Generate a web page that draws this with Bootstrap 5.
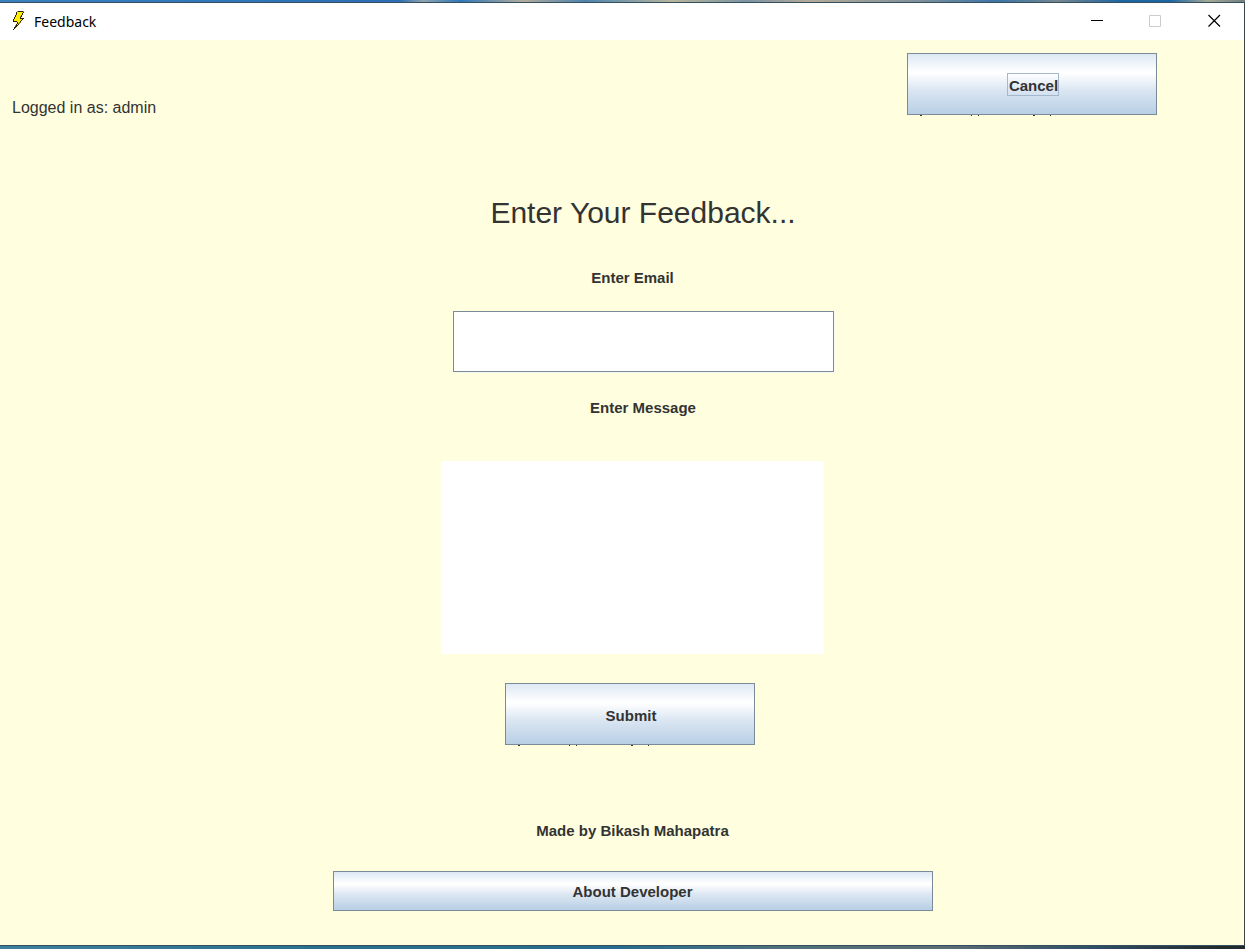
<!DOCTYPE html>
<html lang="en">
<head>
<meta charset="utf-8">
<meta name="viewport" content="width=device-width, initial-scale=1">
<title>Feedback</title>
<link href="https://cdn.jsdelivr.net/npm/bootstrap@5.3.0/dist/css/bootstrap.min.css" rel="stylesheet">
<style>
  body {
    font-family: "Liberation Sans", Arial, sans-serif;
    font-size: 15px;
    line-height: 20px;
    color: #333;
    background: #2f7191;
  }
  .desk-top {
    height: 2px;
    background: linear-gradient(90deg, #3a80c0 0, #2a6db5 32%, #8fa3ad 34%, #2f78b8 37%, #b3ab9c 42%, #4d84ad 47%, #b8b59c 54%, #7b93a3 60%, #b5aa98 65%, #7d8f9b 74%, #3d74a8 80%, #75868f 85%, #1c66a3 90%, #1c66a3 94%, #a5a894 97%, #6e8080 100%);
  }
  .desk-bottom {
    height: 3px;
    background: linear-gradient(90deg, #3f7f9e 0, #2a7190 25%, #286d8f 50%, #51717a 63%, #5b6d73 76%, #2f4e66 88%, #222a2c 98%);
  }
  .app-window { border: solid #34505f; border-width: 1px 0; border-right: 1px solid #3c474c; background: #ffffdf; }
  .title-strip { height: 37px; font-family: "Noto Sans", "Open Sans", sans-serif; font-size: 14px; color: #000; }
  .caption-btn { width: 59px; height: 37px; padding: 0 0 2px; border: 0; background: none; }
  .caption-btn svg, .title-strip svg { display: block; }
  .caption-btn svg { margin: auto; }
  .top-zone { padding: 13px 87px 0 12px; }
  .user-line { font-size: 16px; padding-top: 45px; }
  .metal-btn {
    height: 62px;
    width: 250px;
    padding: 4px 0 0 2px;
    border: 1px solid #7a8a99;
    border-radius: 0;
    color: #333;
    font-weight: 700;
    font-size: 15px;
    line-height: 20px;
    background: linear-gradient(#dde8f3 0, #fff 30%, #fff 32%, #dbe6f2 60%, #b8cfe5 100%);
  }
  .metal-btn.slim { height: 40px; width: 100%; max-width: 600px; padding: 2px 0 0; }
  .metal-btn.framed { padding-top: 0; }
  .focus-frame { display: inline-block; vertical-align: top; border: 1px solid #a3b8cc; height: 23px; line-height: 24px; padding-left: 1px; }
  .clipped-tails { position: absolute; left: 0; top: 100%; }
  .line-a { padding-left: 21px; }
  .line-b { padding-left: 42px; }
  .line-c { padding-left: 16px; }
  .heading-text { font-size: 30px; line-height: 36px; font-weight: 400; }
  .email-box {
    width: 381px; height: 61px; border: 1px solid #7a8a99; border-radius: 0; background: #fff;
    box-shadow: 1px 1px #f8f9f0;
  }
  .message-box { width: 383px; height: 193px; border: 0; border-radius: 0; background: #fff; resize: none; }
  .gap-heading { padding-top: 77px; }
  .gap-small { margin-top: 23px; }
  .gap-field { margin-top: 26px; }
  .gap-mid { margin-top: 29px; }
  .gap-label { margin-top: 37px; }
  .gap-message { margin-top: 43px; }
  .gap-credit { margin-top: 76px; }
  .gap-about { margin-top: 30px; }
  .end-space { padding-bottom: 34px; }
</style>
</head>
<body>
<div class="desk-top"></div>
<div class="app-window">
  <header class="title-strip bg-white d-flex align-items-center justify-content-between">
    <div class="d-flex align-items-center">
      <svg width="34" height="24" viewBox="0 0 34 24" aria-hidden="true">
        <path d="M17 2h6v2l-3 5h2v2l-5 6-2 2 1-3 1-4h-4v-2z" fill="#ffee00"/>
        <path d="M17.5 1.5h6M16.5 2v3M15.5 5v2M14.5 7v2M13.5 9v2M13 11.500h4M17.500 12v2M16.500 14v2M15.500 15.500v2M14.500 17v2M13.500 19v1M23.500 2v1M22.500 3v2M21.500 5v2M20.500 6.500v2M20 8.500h4M22.500 9v1M21.500 10v1M20.500 11v1.500M19.500 12.500v1M18.500 13.500v1.500M17.500 15v1M16.500 16v1M15.500 17v1M14.500 18v1" stroke="#26220a" fill="none"/>
      </svg>
      <span>Feedback</span>
    </div>
    <div class="d-flex">
      <button class="caption-btn" type="button" aria-label="Minimize"><svg width="13" height="13"><path d="M1 6.500h12" stroke="#000"/></svg></button>
      <button class="caption-btn" type="button" aria-label="Maximize" disabled><svg width="13" height="13"><path d="M.5 1.500h11v11H.5z" fill="none" stroke="#ccc"/></svg></button>
      <button class="caption-btn" type="button" aria-label="Close"><svg width="13" height="13"><path d="M.5 1l11.500 11.500M12 1L.5 12.500" stroke="#000" stroke-width="1.200"/></svg></button>
    </div>
  </header>

  <div class="top-zone d-flex justify-content-between align-items-start">
    <div class="user-line">Logged in as: admin</div>
    <div class="position-relative">
      <button class="metal-btn framed d-block" type="button"><span class="focus-frame">Cancel</span></button>
      <svg class="clipped-tails" width="150" height="1" aria-hidden="true"><path d="M13 .5h2M64 .5h1M71 .5h1M126 .5h2M143 .5h1" stroke="#333"/></svg>
    </div>
  </div>

  <main>
    <form class="end-space">
      <h1 class="heading-text line-b gap-heading text-center mb-0">Enter Your Feedback...</h1>
      <div class="line-a gap-label text-center"><label class="fw-bold d-block" for="email">Enter Email</label></div>
      <div class="line-b gap-small d-flex justify-content-center"><input class="email-box" id="email" type="email"></div>
      <div class="line-b gap-field text-center"><label class="fw-bold d-block" for="message">Enter Message</label></div>
      <div class="line-a gap-message d-flex justify-content-center"><textarea class="message-box" id="message"></textarea></div>
      <div class="line-c gap-mid d-flex justify-content-center">
        <div class="position-relative">
          <button class="metal-btn d-block" type="button">Submit</button>
          <svg class="clipped-tails" width="150" height="1" aria-hidden="true"><path d="M13 .5h2M64 .5h1M71 .5h1M126 .5h2M143 .5h1" stroke="#333"/></svg>
        </div>
      </div>
      <div class="line-a gap-credit text-center fw-bold">Made by Bikash Mahapatra</div>
      <div class="line-a gap-about d-flex justify-content-center"><button class="metal-btn slim" type="button">About Developer</button></div>
    </form>
  </main>
</div>
<div class="desk-bottom"></div>
<script src="https://cdn.jsdelivr.net/npm/bootstrap@5.3.0/dist/js/bootstrap.bundle.min.js"></script>
</body>
</html>
